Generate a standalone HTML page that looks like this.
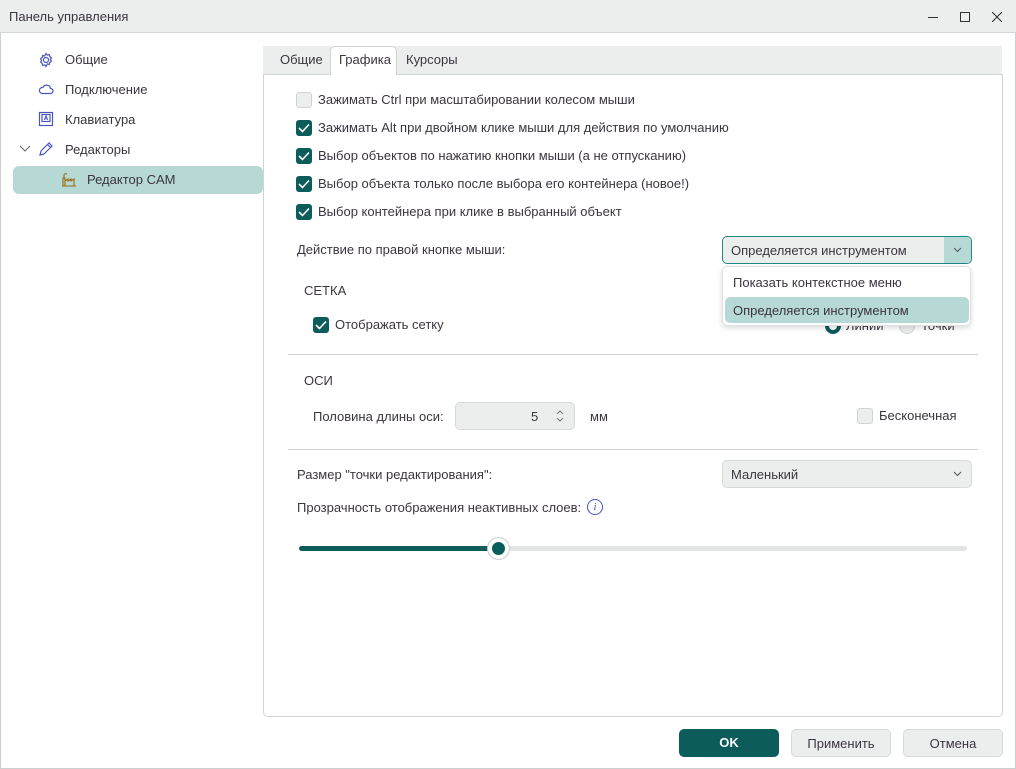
<!DOCTYPE html><html><head><meta charset="utf-8"><style>
*{box-sizing:border-box}body{margin:0;width:1016px;height:769px;overflow:hidden;font-family:"Liberation Sans",sans-serif;font-size:13px;color:#3b3540;background:#fff;position:relative}
.a{position:absolute}
.title{left:0;top:0;width:1016px;height:33px;background:#eceeed;border-bottom:1px solid #d0d6d5}
.cb{width:16px;height:16px;border-radius:3px;background:#0d5c5c;}
.cb.off{background:#eceeed;border:1px solid #cfd3d2}
.cb svg{position:absolute;left:2px;top:3px}
.btn{height:28px;border-radius:5px;text-align:center;line-height:28px}
</style></head><body>
<div class="a" style="left:0;top:0;width:1016px;height:769px;border:1px solid #c9d0cf"></div>
<div class="a title"></div>
<div class="a" style="left:9px;top:9px">Панель управления</div>
<div class="a" style="left:928px;top:17px;width:10px;height:1px;background:#333"></div>
<div class="a" style="left:960px;top:12px;width:10px;height:10px;border:1px solid #333"></div>
<svg class="a" style="left:992px;top:12px" width="10" height="10" viewBox="0 0 10 10" stroke="#333" stroke-width="1.1"><path d="M0 0L10 10M10 0L0 10"/></svg>
<!-- sidebar -->
<svg class="a" style="left:38px;top:52px" width="16" height="16" viewBox="0 0 16 16" fill="none" stroke="#4a55c0" stroke-width="1.2"><circle cx="8" cy="8" r="2.5"/><path d="M8 1.5l1.3 1.6 2-.5.5 2 1.6 1.3-1 1.6 1 1.6-1.6 1.3-.5 2-2-.5L8 14.5l-1.3-1.6-2 .5-.5-2L2.6 10l1-1.6-1-1.6 1.6-1.3.5-2 2 .5z"/></svg>
<div class="a" style="left:65px;top:52px">Общие</div>
<svg class="a" style="left:38px;top:83px" width="16" height="12" viewBox="0 0 16 12" fill="none" stroke="#4a55c0" stroke-width="1.2"><path d="M4 10.5h8.5a2.5 2.5 0 0 0 0-5 4 4 0 0 0-7.6-1A3 3 0 0 0 4 10.5z"/></svg>
<div class="a" style="left:65px;top:82px">Подключение</div>
<svg class="a" style="left:38px;top:111px" width="16" height="16" viewBox="0 0 16 16" fill="none" stroke="#4a55c0" stroke-width="1.2"><rect x="1.5" y="1.5" width="13" height="13"/><rect x="4" y="3.5" width="8" height="7"/><path d="M6.5 9l1.5-4 1.5 4"/></svg>
<div class="a" style="left:65px;top:112px">Клавиатура</div>
<svg class="a" style="left:19px;top:145px" width="12" height="8" viewBox="0 0 12 8" fill="none" stroke="#666" stroke-width="1"><path d="M1 1l5 5 5-5"/></svg>
<svg class="a" style="left:38px;top:141px" width="16" height="16" viewBox="0 0 16 16" fill="none" stroke="#4a55c0" stroke-width="1.2"><path d="M2 14l1-4 8-8 3 3-8 8z M9.5 3.5l3 3"/></svg>
<div class="a" style="left:65px;top:142px">Редакторы</div>
<div class="a" style="left:13px;top:166px;width:250px;height:28px;background:#b6d9d6;border-radius:6px"></div>
<svg class="a" style="left:61px;top:171px" width="16" height="16" viewBox="0 0 16 16" fill="none" stroke="#9a6a10" stroke-width="1.1"><path d="M1 15h14M2 15V7h2v8M4 10l3-2v2l3-2v2l3-2v7M3 7V4a2 2 0 0 1 3-1"/></svg>
<div class="a" style="left:87px;top:172px">Редактор CAM</div>
<!-- tabs -->
<div class="a" style="left:263px;top:46px;width:739px;height:28px;background:#eceeed"></div>
<div class="a" style="left:280px;top:52px">Общие</div>
<div class="a" style="left:330px;top:46px;width:67px;height:29px;background:#fff;border:1px solid #cfd5d4;border-bottom:none;border-radius:5px 5px 0 0"></div>
<div class="a" style="left:339px;top:52px">Графика</div>
<div class="a" style="left:406px;top:52px">Курсоры</div>
<div class="a" style="left:263px;top:74px;width:740px;height:643px;border:1px solid #cfd5d4;border-radius:0 0 5px 5px"></div>
<div class="a" style="left:331px;top:74px;width:65px;height:2px;background:#fff"></div>
<!-- checkboxes -->
<div class="a cb off" style="left:296px;top:92px"></div><div class="a" style="left:318px;top:92px">Зажимать Ctrl при масштабировании колесом мыши</div>
<div class="a cb" style="left:296px;top:120px"><svg width="12" height="10" viewBox="0 0 12 10" fill="none" stroke="#fff" stroke-width="1.6"><path d="M1 5l3.5 3.5L11 1.5"/></svg></div><div class="a" style="left:318px;top:120px">Зажимать Alt при двойном клике мыши для действия по умолчанию</div>
<div class="a cb" style="left:296px;top:148px"><svg width="12" height="10" viewBox="0 0 12 10" fill="none" stroke="#fff" stroke-width="1.6"><path d="M1 5l3.5 3.5L11 1.5"/></svg></div><div class="a" style="left:318px;top:148px">Выбор объектов по нажатию кнопки мыши (а не отпусканию)</div>
<div class="a cb" style="left:296px;top:176px"><svg width="12" height="10" viewBox="0 0 12 10" fill="none" stroke="#fff" stroke-width="1.6"><path d="M1 5l3.5 3.5L11 1.5"/></svg></div><div class="a" style="left:318px;top:176px">Выбор объекта только после выбора его контейнера (новое!)</div>
<div class="a cb" style="left:296px;top:204px"><svg width="12" height="10" viewBox="0 0 12 10" fill="none" stroke="#fff" stroke-width="1.6"><path d="M1 5l3.5 3.5L11 1.5"/></svg></div><div class="a" style="left:318px;top:204px">Выбор контейнера при клике в выбранный объект</div>
<div class="a" style="left:297px;top:242px">Действие по правой кнопке мыши:</div>
<div class="a" style="left:722px;top:236px;width:250px;height:28px;border:1px solid #1e8a84;border-radius:5px;background:#eceeed;overflow:hidden"><div class="a" style="left:8px;top:6px">Определяется инструментом</div><div class="a" style="right:0;top:0;width:27px;height:26px;background:#b6d9d6"></div><svg class="a" style="right:9px;top:10px" width="9" height="6" viewBox="0 0 9 6" fill="none" stroke="#555"><path d="M1 1l3.5 3.5L8 1"/></svg></div>
<div class="a" style="left:304px;top:283px">СЕТКА</div>
<div class="a cb" style="left:313px;top:317px"><svg width="12" height="10" viewBox="0 0 12 10" fill="none" stroke="#fff" stroke-width="1.6"><path d="M1 5l3.5 3.5L11 1.5"/></svg></div><div class="a" style="left:335px;top:317px">Отображать сетку</div>
<div class="a" style="left:825px;top:318px;width:16px;height:16px;border-radius:50%;border:4px solid #0d5c5c"></div><div class="a" style="left:846px;top:318px">Линии</div>
<div class="a" style="left:899px;top:318px;width:16px;height:16px;border-radius:50%;border:1px solid #cfd3d2;background:#eceeed"></div><div class="a" style="left:921px;top:318px">Точки</div>
<div class="a" style="left:722px;top:266px;width:249px;height:60px;background:#fff;border:1px solid #dde2e1;border-radius:5px;box-shadow:0 2px 6px rgba(0,0,0,.15)"></div>
<div class="a" style="left:733px;top:275px">Показать контекстное меню</div>
<div class="a" style="left:725px;top:297px;width:244px;height:26px;background:#b6d9d6;border-radius:5px"></div>
<div class="a" style="left:733px;top:303px">Определяется инструментом</div>
<div class="a" style="left:288px;top:354px;width:690px;height:1px;background:#cfd5d4"></div>
<div class="a" style="left:304px;top:373px">ОСИ</div>
<div class="a" style="left:313px;top:409px">Половина длины оси:</div>
<div class="a" style="left:455px;top:402px;width:120px;height:28px;background:#eceeed;border:1px solid #d6dad9;border-radius:5px"><div class="a" style="left:75px;top:6px">5</div><svg class="a" style="left:99px;top:6px" width="10" height="14" viewBox="0 0 10 14" fill="none" stroke="#777"><path d="M2 5l3-3 3 3M2 9l3 3 3-3"/></svg></div>
<div class="a" style="left:590px;top:409px">мм</div>
<div class="a cb off" style="left:857px;top:408px"></div><div class="a" style="left:879px;top:408px">Бесконечная</div>
<div class="a" style="left:288px;top:449px;width:690px;height:1px;background:#cfd5d4"></div>
<div class="a" style="left:297px;top:467px">Размер "точки редактирования":</div>
<div class="a" style="left:722px;top:460px;width:250px;height:28px;background:#eceeed;border:1px solid #d6dad9;border-radius:5px"><div class="a" style="left:8px;top:6px">Маленький</div><svg class="a" style="right:9px;top:10px" width="9" height="6" viewBox="0 0 9 6" fill="none" stroke="#555"><path d="M1 1l3.5 3.5L8 1"/></svg></div>
<div class="a" style="left:297px;top:500px">Прозрачность отображения неактивных слоев:</div>
<div class="a" style="left:587px;top:499px;width:16px;height:16px;border-radius:50%;border:1px solid #4a55c0;color:#4a55c0;font-size:11px;font-style:italic;text-align:center;line-height:14px;font-family:'Liberation Serif',serif">i</div>
<div class="a" style="left:299px;top:546px;width:668px;height:5px;background:#e3e6e5;border-radius:3px"></div>
<div class="a" style="left:299px;top:546px;width:200px;height:5px;background:#0d5c5c;border-radius:3px"></div>
<div class="a" style="left:488px;top:538px;width:21px;height:21px;border-radius:50%;background:#0d5c5c;border:4px solid #fff;box-shadow:0 0 0 1px #ccc"></div>
<!-- buttons -->
<div class="a btn" style="left:679px;top:729px;width:100px;background:#0d5c5c;color:#fff;font-weight:bold">OK</div>
<div class="a btn" style="left:791px;top:729px;width:100px;background:#eceeed;border:1px solid #d6dad9">Применить</div>
<div class="a btn" style="left:903px;top:729px;width:100px;background:#eceeed;border:1px solid #d6dad9">Отмена</div>
</body></html>
